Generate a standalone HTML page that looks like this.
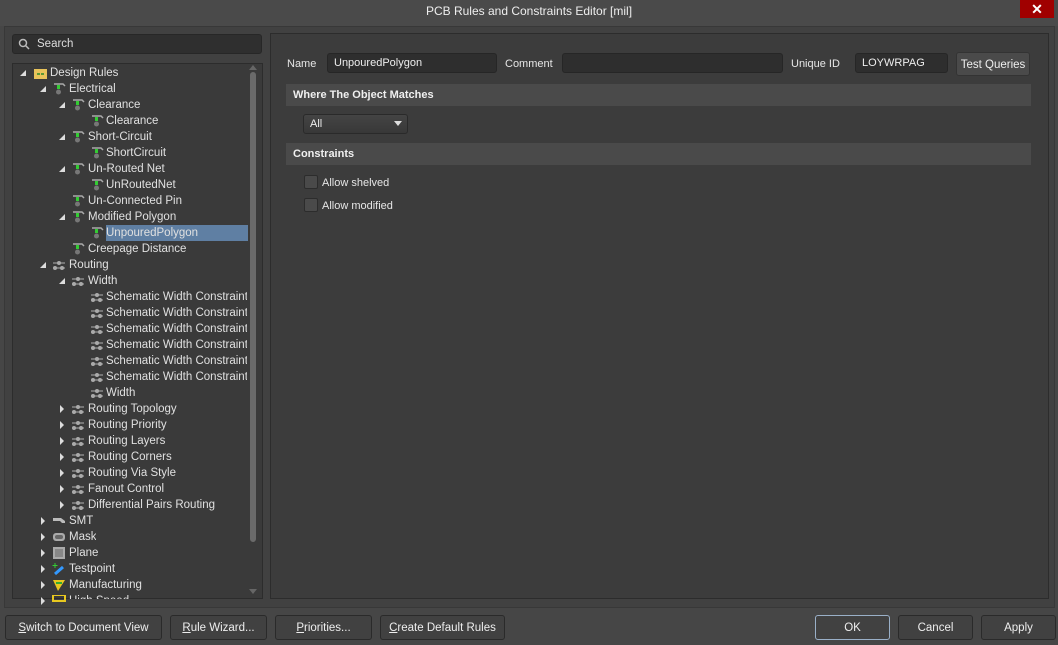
<!DOCTYPE html>
<html><head><style>
*{box-sizing:border-box;margin:0;padding:0}
body{width:1058px;height:645px;background:#464646;font-family:"Liberation Sans",sans-serif;font-size:11px;color:#e6e6e6;position:relative;overflow:hidden}
.a{position:absolute}
.title{left:0;top:0;width:1058px;height:26px;background:#4a4a4a;text-align:center;line-height:22px;font-size:12px;color:#eee}
.close{right:4px;top:0;width:34px;height:18px;background:#a00000;color:#fff;text-align:center;line-height:18px;font-size:14px;font-weight:bold}
.frame{left:4px;top:26px;width:1051px;height:582px;background:#414141;border:1px solid #383838}
.search{left:12px;top:34px;width:250px;height:20px;background:#2f2f2f;border:1px solid #272727;border-radius:3px;line-height:19px;padding-left:24px;color:#ddd;font-size:11.5px}
.tree{left:12px;top:63px;width:251px;height:536px;background:#3a3a3a;border:1px solid #2c2c2c;overflow:hidden}
.right{left:270px;top:33px;width:779px;height:566px;background:#3c3c3c;border:1px solid #2c2c2c}
.row{position:absolute;height:16px;line-height:16px;white-space:nowrap;color:#e0e0e0;font-size:11.5px}
.inp{background:#2e2e2e;border:1px solid #262626;border-radius:3px;height:20px;line-height:19px;padding-left:6px;color:#eee}
.hdr{left:286px;width:745px;height:22px;background:#4a4a4a;font-weight:bold;line-height:23px;padding-left:7px;color:#f0f0f0}
.btn{background:#414141;border:1px solid #2a2a2a;border-radius:3px;height:25px;line-height:24px;text-align:center;color:#eee;font-size:11.5px}
.cb{width:14px;height:14px;background:#4a4a4a;border:1px solid #2c2c2c;border-radius:2px}
u{text-decoration:underline}
</style></head><body>
<div class="a title">PCB Rules and Constraints Editor [mil]</div>
<div class="a close">✕</div>
<div class="a frame"></div>
<div class="a search">Search</div>
<svg class="a" style="left:18px;top:38px" width="12" height="12"><circle cx="5" cy="5" r="3.5" stroke="#bbb" stroke-width="1.5" fill="none"/><line x1="7.5" y1="7.5" x2="11" y2="11" stroke="#bbb" stroke-width="1.5"/></svg>
<div class="a tree">
<div class="a" style="left:237px;top:8px;width:6px;height:470px;background:#6a6a6a;border-radius:3px"></div>
<div class="a" style="left:236px;top:1px;width:0;height:0;border-left:4px solid transparent;border-right:4px solid transparent;border-bottom:5px solid #666"></div>
<div class="a" style="left:236px;top:525px;width:0;height:0;border-left:4px solid transparent;border-right:4px solid transparent;border-top:5px solid #666"></div>
<div class="a" style="left:93px;top:161px;width:142px;height:16px;background:#5f7fa3"></div>
</div>
<div id="t"></div>
<div class="a right"></div>
<div class="a" style="left:287px;top:58px">Name</div>
<div class="a inp" style="left:327px;top:53px;width:170px">UnpouredPolygon</div>
<div class="a" style="left:505px;top:58px">Comment</div>
<div class="a inp" style="left:562px;top:53px;width:221px"></div>
<div class="a" style="left:791px;top:58px">Unique ID</div>
<div class="a inp" style="left:855px;top:53px;width:93px">LOYWRPAG</div>
<div class="a btn" style="left:956px;top:52px;width:74px;height:24px;background:#4a4a4a;border-color:#333">Test Queries</div>
<div class="a hdr" style="top:84px">Where The Object Matches</div>
<div class="a inp" style="left:303px;top:114px;width:105px;border-color:#2a2a2a;background:linear-gradient(#444,#383838)">All</div>
<div class="a" style="left:394px;top:121px;border-left:4px solid transparent;border-right:4px solid transparent;border-top:5px solid #ddd"></div>
<div class="a hdr" style="top:143px">Constraints</div>
<div class="a cb" style="left:304px;top:175px"></div><div class="a" style="left:322px;top:177px">Allow shelved</div>
<div class="a cb" style="left:304px;top:198px"></div><div class="a" style="left:322px;top:200px">Allow modified</div>
<div class="a btn" style="left:5px;top:615px;width:157px"><u>S</u>witch to Document View</div>
<div class="a btn" style="left:170px;top:615px;width:97px"><u>R</u>ule Wizard...</div>
<div class="a btn" style="left:275px;top:615px;width:97px"><u>P</u>riorities...</div>
<div class="a btn" style="left:380px;top:615px;width:125px"><u>C</u>reate Default Rules</div>
<div class="a btn" style="left:815px;top:615px;width:75px;border-color:#9ab0c8">OK</div>
<div class="a btn" style="left:898px;top:615px;width:75px">Cancel</div>
<div class="a btn" style="left:981px;top:615px;width:75px">Apply</div>
<script>
const R=[
[0,'e','f','Design Rules'],[1,'e','g','Electrical'],[2,'e','g','Clearance'],[3,'','g','Clearance'],[2,'e','g','Short-Circuit'],[3,'','g','ShortCircuit'],[2,'e','g','Un-Routed Net'],[3,'','g','UnRoutedNet'],[2,'','g','Un-Connected Pin'],[2,'e','g','Modified Polygon'],[3,'','g','UnpouredPolygon'],[2,'','g','Creepage Distance'],
[1,'e','r','Routing'],[2,'e','r','Width'],[3,'','r','Schematic Width Constraint'],[3,'','r','Schematic Width Constraint'],[3,'','r','Schematic Width Constraint'],[3,'','r','Schematic Width Constraint'],[3,'','r','Schematic Width Constraint'],[3,'','r','Schematic Width Constraint'],[3,'','r','Width'],
[2,'c','r','Routing Topology'],[2,'c','r','Routing Priority'],[2,'c','r','Routing Layers'],[2,'c','r','Routing Corners'],[2,'c','r','Routing Via Style'],[2,'c','r','Fanout Control'],[2,'c','r','Differential Pairs Routing'],
[1,'c','s','SMT'],[1,'c','m','Mask'],[1,'c','p','Plane'],[1,'c','t','Testpoint'],[1,'c','y','Manufacturing'],[1,'c','h','High Speed']];
const IC={f:'<rect x="1" y="2" width="13" height="10" fill="#e8c35a"/><path d="M4 7h3M8 7h3" stroke="#2a8a2a" stroke-width="1.5"/>',
g:'<path d="M2 1h9l2 2" stroke="#aaa" stroke-width="1.5" fill="none"/><rect x="5" y="2" width="3" height="4" fill="#3c3"/><circle cx="6.5" cy="9" r="2.5" fill="#777"/>',
r:'<path d="M1 4h12M1 9h12" stroke="#999" stroke-width="1.2"/><circle cx="7" cy="4" r="2" fill="#aaa"/><circle cx="3" cy="9" r="2" fill="#aaa"/><circle cx="10" cy="9" r="2" fill="#aaa"/>',
s:'<path d="M1 3h8l4 3v2h-3l-2-2H1z" fill="#bbb"/>',m:'<rect x="1" y="2" width="12" height="8" rx="3" fill="#aaa"/><rect x="3" y="4" width="8" height="4" rx="2" fill="#666"/>',
p:'<rect x="1" y="0" width="12" height="12" fill="#aaa"/><rect x="3" y="2" width="8" height="8" fill="#888"/>',t:'<path d="M3 11l8-7" stroke="#39f" stroke-width="3"/><path d="M3 0v5M0.5 2.5h5" stroke="#3c3"/>',
y:'<path d="M1 1h12l-7 11z" fill="#e8c820"/><path d="M4 4h6" stroke="#3a3" stroke-width="2"/>',h:'<rect x="1" y="0" width="12" height="6" fill="none" stroke="#e8c820" stroke-width="2"/>'};
let h='';
R.forEach((r,i)=>{const y=65+i*16,L=r[0],tx=[20,40,59,0][L],ix=[33,52,71,90][L],x=[50,69,88,106][L];
if(r[1]=='e')h+=`<div class="a" style="left:${tx}px;top:${y+5}px;width:0;height:0;border-left:6px solid transparent;border-bottom:6px solid #ddd"></div>`;
if(r[1]=='c')h+=`<div class="a" style="left:${tx+1}px;top:${y+4}px;width:0;height:0;border-top:4px solid transparent;border-bottom:4px solid transparent;border-left:4px solid #ddd"></div>`;
h+=`<svg class="a" style="left:${ix}px;top:${y+2}px" width="15" height="13">${IC[r[2]]}</svg>`;
h+=`<div class="row" style="left:${x}px;top:${y}px;max-width:${247-x}px;overflow:hidden${i==33?';height:6px':''}">${r[3]}</div>`;});
document.getElementById('t').innerHTML=h;
</script>
</body></html>
